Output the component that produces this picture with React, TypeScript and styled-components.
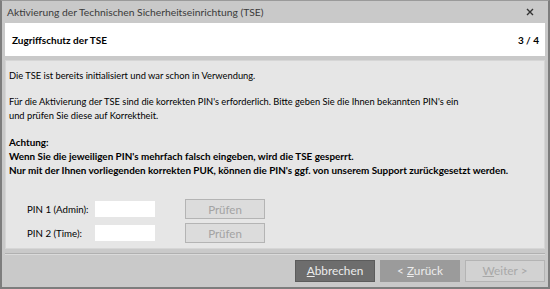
import React from 'react';
import styled, { createGlobalStyle } from 'styled-components';

const GlobalStyle = createGlobalStyle`
  html, body {
    margin: 0;
    padding: 0;
    background: #c9c9c9;
  }
  * {
    box-sizing: border-box;
  }
`;

const FONT = `Lato, "Noto Sans", sans-serif`;

const Window = styled.div`
  width: 550px;
  height: 289px;
  background: #c9c9c9;
  border: 2px solid #7d7d7d;
  border-top: 1px solid #9a9a9a;
  display: flex;
  flex-direction: column;
  font-family: ${FONT};
  color: #000;
`;

const TitleBar = styled.div`
  height: 21px;
  display: flex;
  align-items: center;
  justify-content: space-between;
  padding: 0 14px 0 5px;
  font-size: 10.3px;
  color: #3a3a3a;
`;

const CloseIcon = () => (
  <svg width="8" height="8" viewBox="0 0 8 8">
    <path d="M1 1L7 7M7 1L1 7" stroke="#333" strokeWidth="1.4" />
  </svg>
);

const HeaderPanel = styled.div`
  margin: 1px 3px 0;
  height: 33px;
  background: #fff;
  display: flex;
  align-items: center;
  justify-content: space-between;
  padding: 0 6px 0 7px;
  font-size: 10px;
  font-weight: bold;
`;

const ContentPanel = styled.div`
  margin: 4px 3px 0;
  height: 189px;
  background: #e6e6e6;
  border: 1px solid #d6d6d6;
  padding: 8px 3px 0;
  display: flex;
  flex-direction: column;
  font-size: 9.3px;
  line-height: 14px;
`;

const Paragraph = styled.p<{ $bold?: boolean }>`
  margin: 0 0 12px;
  font-weight: ${(p) => (p.$bold ? 'bold' : 'normal')};
  font-size: ${(p) => (p.$bold ? '9.9px' : '9.3px')};
`;

const PinGrid = styled.div`
  margin-top: auto;
  margin-bottom: 5px;
  display: grid;
  grid-template-columns: 68px 60px 30px 80px;
  row-gap: 4px;
  align-items: center;
  padding-left: 18px;
`;

const PinLabel = styled.span`
  font-size: 9.7px;
`;

const PinInput = styled.input`
  width: 60px;
  height: 16px;
  border: none;
  background: #fff;
  outline: none;
  font-family: ${FONT};
  font-size: 9px;
  padding: 0 3px;
`;

const Spacer = styled.span``;

const CheckButton = styled.button`
  width: 80px;
  height: 20px;
  background: #dcdcdc;
  border: 1px solid #b4b4b4;
  color: #a3a3a3;
  font-family: ${FONT};
  font-size: 11.5px;
  padding: 0;
`;

const Separator = styled.div`
  margin: 4px 3px 0;
  border-top: 1px solid #b0b0b0;
  border-bottom: 1px solid #dadada;
`;

const Footer = styled.div`
  flex: 1;
  display: flex;
  justify-content: flex-end;
  align-items: center;
  gap: 5px;
  padding: 0 3px 1px;
`;

const NavButton = styled.button<{ $variant: 'dark' | 'mid' | 'light' }>`
  width: 80px;
  height: 22px;
  padding: 0;
  font-family: ${FONT};
  font-size: 11.8px;
  background: ${(p) => (p.$variant === 'dark' ? '#6d6d6d' : p.$variant === 'mid' ? '#9b9b9b' : '#d2d2d2')};
  border: 1px solid ${(p) => (p.$variant === 'dark' ? '#5c5c5c' : p.$variant === 'mid' ? '#9b9b9b' : '#b4b4b4')};
  color: ${(p) => (p.$variant === 'light' ? '#a8a8a8' : '#ececec')};
  u {
    text-decoration: underline;
    text-underline-offset: 1px;
  }
`;

export default function App() {
  return (
    <>
      <GlobalStyle />
      <Window>
        <TitleBar>
          <span>Aktivierung der Technischen Sicherheitseinrichtung (TSE)</span>
          <CloseIcon />
        </TitleBar>
        <HeaderPanel>
          <span>Zugriffschutz der TSE</span>
          <span>3 / 4</span>
        </HeaderPanel>
        <ContentPanel>
          <Paragraph>Die TSE ist bereits initialisiert und war schon in Verwendung.</Paragraph>
          <Paragraph>
            Für die Aktivierung der TSE sind die korrekten PIN's erforderlich. Bitte geben Sie die Ihnen bekannten PIN's ein
            <br />
            und prüfen Sie diese auf Korrektheit.
          </Paragraph>
          <Paragraph $bold>
            Achtung:
            <br />
            Wenn Sie die jeweiligen PIN's mehrfach falsch eingeben, wird die TSE gesperrt.
            <br />
            Nur mit der Ihnen vorliegenden korrekten PUK, können die PIN's ggf. von unserem Support zurückgesetzt werden.
          </Paragraph>
          <PinGrid>
            <PinLabel>PIN 1 (Admin):</PinLabel>
            <PinInput />
            <Spacer />
            <CheckButton disabled>Prüfen</CheckButton>
            <PinLabel>PIN 2 (Time):</PinLabel>
            <PinInput />
            <Spacer />
            <CheckButton disabled>Prüfen</CheckButton>
          </PinGrid>
        </ContentPanel>
        <Separator />
        <Footer>
          <NavButton $variant="dark"><u>A</u>bbrechen</NavButton>
          <NavButton $variant="mid">&lt; <u>Z</u>urück</NavButton>
          <NavButton $variant="light" disabled><u>W</u>eiter &gt;</NavButton>
        </Footer>
      </Window>
    </>
  );
}
